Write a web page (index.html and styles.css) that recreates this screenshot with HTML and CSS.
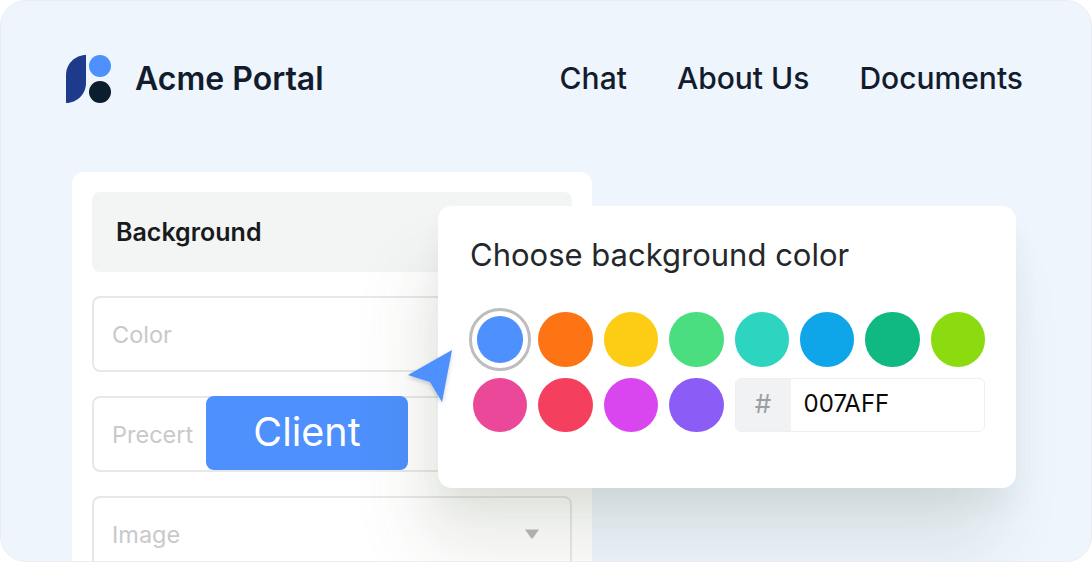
FILE: index.html
```
<!DOCTYPE html>
<html lang="en">
<head>
<meta charset="utf-8">
<title>Acme Portal</title>
<link rel="stylesheet" href="styles.css">
</head>
<body>
<div class="frame">
  <header class="header">
    <div class="brand">
      <svg class="logo" width="45" height="48" viewBox="0 0 45 48" aria-hidden="true">
        <path d="M20 0V28C20 39 11 48 0 48V20C0 9 9 0 20 0Z" fill="#1e3a8a"/>
        <circle cx="34" cy="11" r="11" fill="#4d90fe"/>
        <circle cx="34" cy="37" r="11" fill="#0a1e2e"/>
      </svg>
      <span class="brand-name">Acme Portal</span>
    </div>
    <nav class="nav">
      <a class="nav-link">Chat</a>
      <a class="nav-link">About Us</a>
      <a class="nav-link">Documents</a>
    </nav>
  </header>

  <section class="card">
    <div class="card-title">Background</div>
    <div class="field">Color</div>
    <div class="field">Precert</div>
    <div class="field field-select">Image
      <svg class="caret" width="16" height="10" viewBox="0 0 16 10" aria-hidden="true"><path d="M1 0.5H15L9 9Q8 10 7 9Z" fill="#b9b9b9"/></svg>
    </div>
  </section>

  <div class="client-tag">Client</div>

  <section class="popup">
    <h2 class="popup-title">Choose background color</h2>
    <div class="swatches">
      <span class="swatch selected"></span>
      <span class="swatch orange"></span>
      <span class="swatch yellow"></span>
      <span class="swatch green"></span>
      <span class="swatch teal"></span>
      <span class="swatch sky"></span>
      <span class="swatch emerald"></span>
      <span class="swatch lime"></span>
      <span class="swatch pink"></span>
      <span class="swatch red"></span>
      <span class="swatch fuchsia"></span>
      <span class="swatch violet"></span>
      <div class="hex"><span class="hex-prefix">#</span><span class="hex-value">007AFF</span></div>
    </div>
  </section>

  <svg class="pointer" width="46" height="54" viewBox="0 0 46 54" aria-hidden="true">
    <path d="M45 1L1 26L23 33L35 53Z" fill="#4d90fe"/>
  </svg>
</div>
</body>
</html>
```

FILE: styles.css
```
* {
  box-sizing: border-box;
}

html,
body {
  margin: 0;
  height: 100%;
  background: #ffffff;
}

body {
  font-family: Inter, "Liberation Sans", sans-serif;
}

.frame {
  position: relative;
  width: 1092px;
  height: 562px;
  overflow: hidden;
  background: #eef5fd;
  border: 1px solid #e9eef2;
  border-radius: 26px;
}

.header {
  display: flex;
  align-items: center;
  justify-content: space-between;
  height: 48px;
  margin: 54px 68px 0 65px;
}

.brand {
  display: flex;
  align-items: center;
  gap: 24px;
}

.logo {
  display: block;
}

.brand-name {
  padding-bottom: 2px;
  font-size: 32px;
  font-weight: 560;
  color: #121c2d;
}

.nav {
  display: flex;
  gap: 50px;
  padding-bottom: 2px;
}

.nav-link {
  font-size: 30px;
  font-weight: 500;
  color: #121c2d;
}

.card {
  display: flex;
  flex-direction: column;
  gap: 24px;
  width: 520px;
  height: 420px;
  margin: 69px 0 0 71px;
  padding: 20px;
  background: #ffffff;
  border-radius: 12px;
}

.card-title {
  display: flex;
  align-items: center;
  flex: none;
  height: 80px;
  padding-left: 24px;
  font-size: 25px;
  font-weight: 600;
  color: #181a1b;
  background: #f3f5f5;
  border-radius: 8px;
}

.field {
  display: flex;
  align-items: center;
  justify-content: space-between;
  flex: none;
  height: 76px;
  padding: 0 30px 0 18px;
  font-size: 23.5px;
  color: #c8c9ca;
  background: #ffffff;
  border: 2px solid #e8e8e8;
  border-radius: 8px;
}

.caret {
  display: block;
}

.client-tag {
  position: absolute;
  left: 205px;
  top: 395px;
  display: flex;
  align-items: center;
  justify-content: center;
  width: 202px;
  height: 74px;
  padding-bottom: 2px;
  font-size: 39.5px;
  color: #ffffff;
  background: #4d90fe;
  border-radius: 8px;
}

.popup {
  position: absolute;
  left: 437px;
  top: 205px;
  width: 578px;
  height: 282px;
  padding: 30px 30px 0 35px;
  background: #ffffff;
  border-radius: 14px;
  box-shadow: -20px 60px 70px -2px rgba(55, 70, 36, 0.11), 0 20px 30px -4px rgba(55, 70, 36, 0.07);
}

.popup-title {
  margin: 0 0 0 -3px;
  height: 38px;
  font-size: 31px;
  line-height: 38px;
  font-weight: 400;
  color: #25282b;
}

.swatches {
  display: grid;
  grid-template-columns: repeat(8, 54.4px);
  grid-auto-rows: 54.4px;
  column-gap: 11px;
  row-gap: 11px;
  margin-top: 38.4px;
}

.swatch {
  display: block;
  border-radius: 50%;
}

.selected {
  position: relative;
  margin: 4px;
  background: #4d90fe;
}

.selected::after {
  content: "";
  position: absolute;
  inset: -8px;
  border: 3px solid #bdbdbd;
  border-radius: 50%;
}

.orange { background: #fd7415; }
.yellow { background: #fccd14; }
.green { background: #4ade80; }
.teal { background: #2dd4bf; }
.sky { background: #0ea5e9; }
.emerald { background: #10b981; }
.lime { background: #8cdb10; }
.pink { background: #ec4899; }
.red { background: #f43f5e; }
.fuchsia { background: #d946ef; }
.violet { background: #8b5cf6; }

.hex {
  grid-column: span 4;
  display: flex;
  align-items: stretch;
  overflow: hidden;
  background: #ffffff;
  border: 1px solid #eeeff0;
  border-radius: 6px;
}

.hex-prefix {
  display: flex;
  align-items: center;
  justify-content: center;
  flex: none;
  width: 55px;
  padding-bottom: 2px;
  font-size: 26px;
  color: #9b9fa4;
  background: #f1f2f3;
}

.hex-value {
  display: flex;
  align-items: center;
  padding: 0 0 2px 13px;
  font-size: 24px;
  color: #0a0a0a;
}

.pointer {
  position: absolute;
  left: 406px;
  top: 348px;
  filter: drop-shadow(0 2px 2px rgba(40, 60, 90, 0.25));
}
```
